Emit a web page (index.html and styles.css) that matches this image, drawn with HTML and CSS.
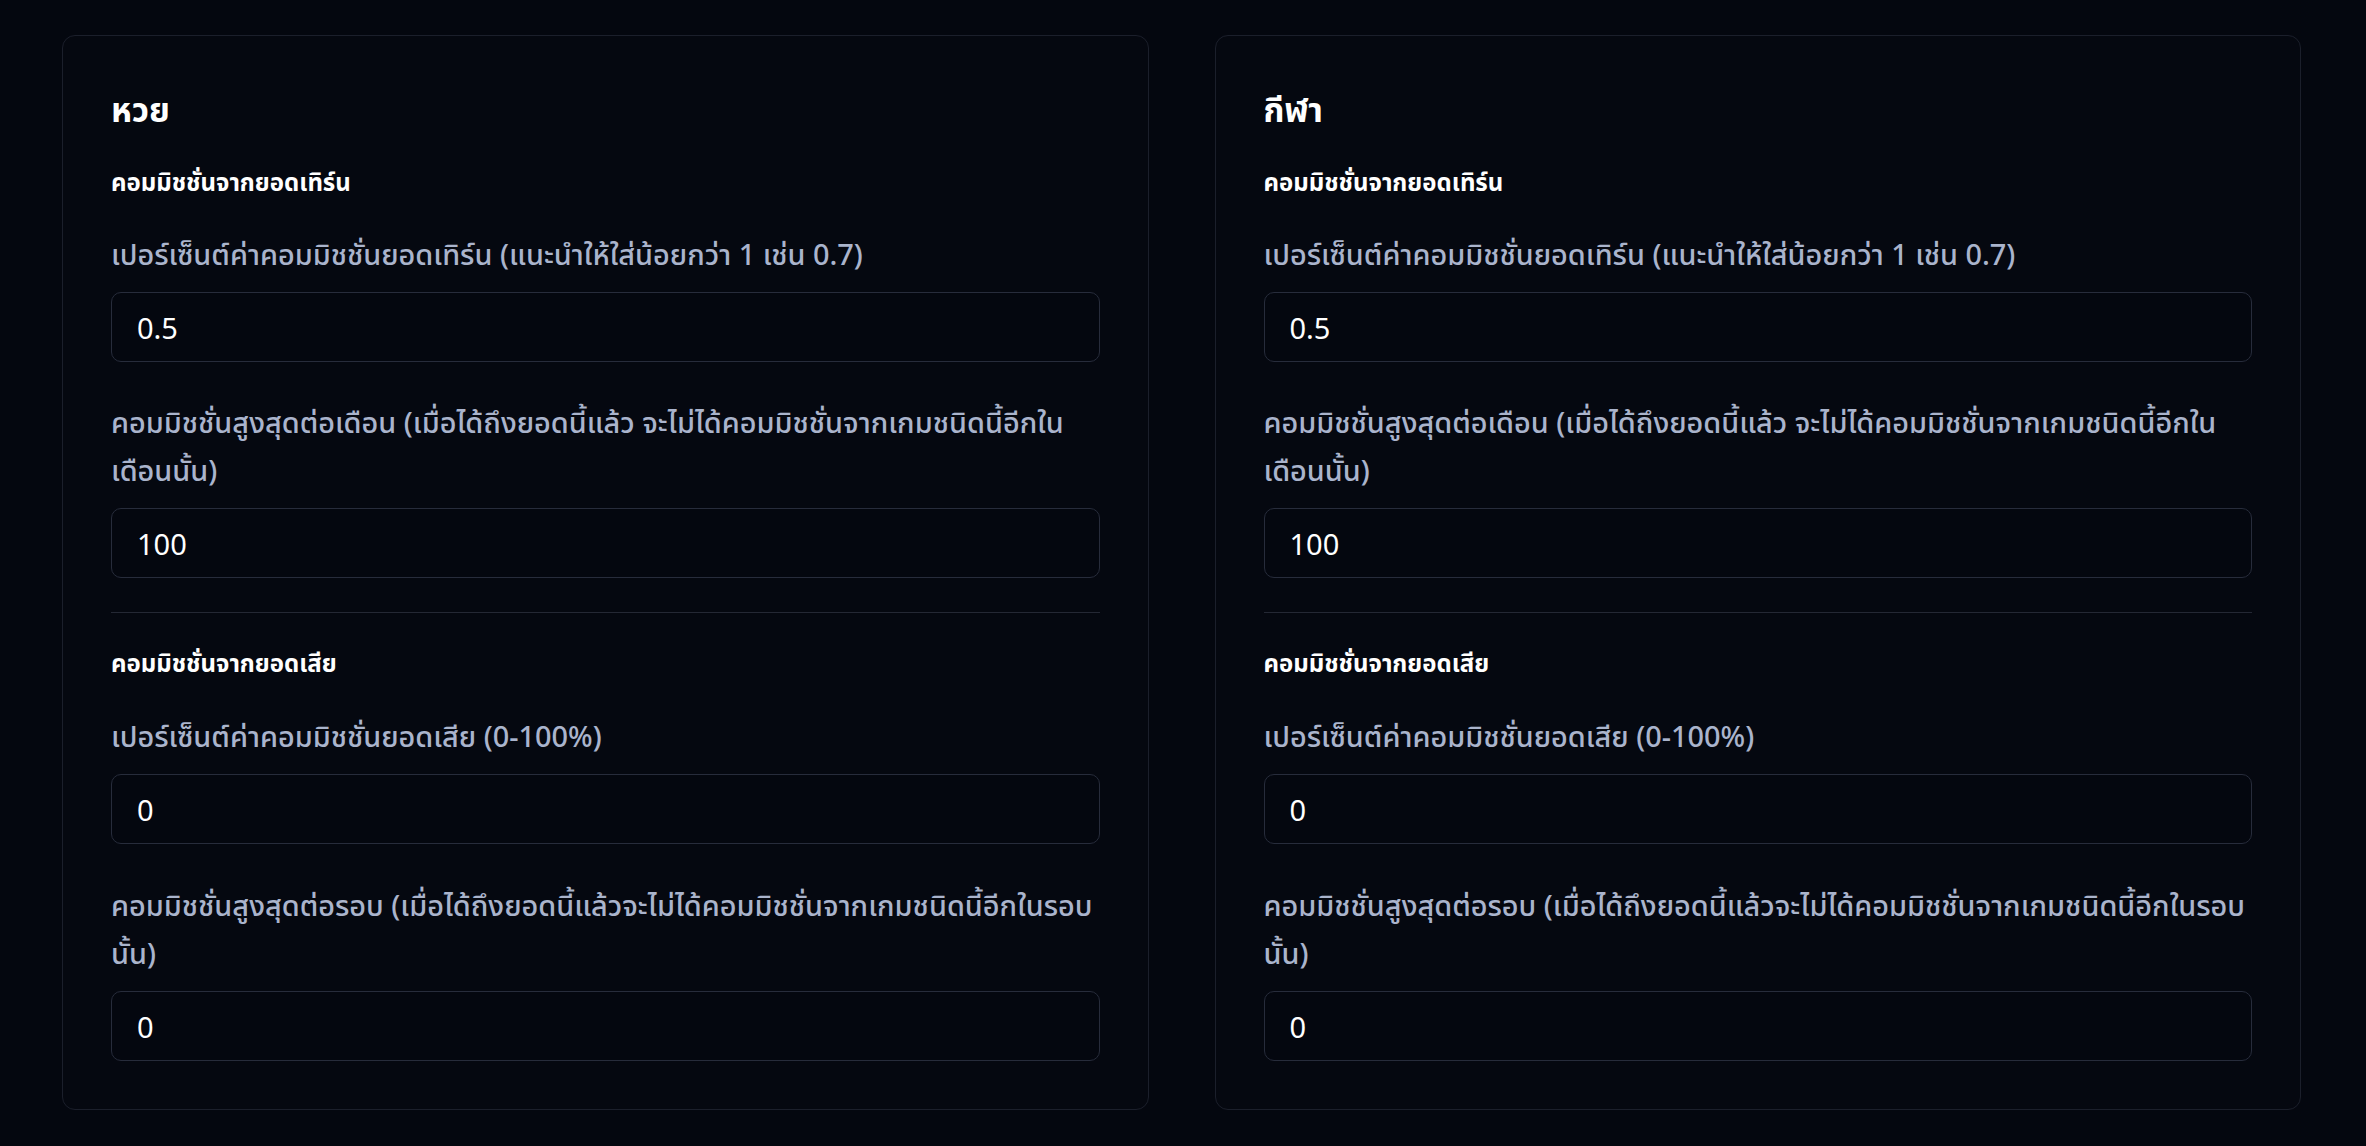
FILE: index.html
```html
<!DOCTYPE html>
<html lang="th">
<head>
<meta charset="utf-8">
<title>Commission settings</title>
<link rel="stylesheet" href="styles.css">
</head>
<body>
<main class="page">
  <section class="card">
    <h2 class="card-title">หวย</h2>
    <h3 class="section-title">คอมมิชชั่นจากยอดเทิร์น</h3>
    <div class="field">
      <label class="field-label">เปอร์เซ็นต์ค่าคอมมิชชั่นยอดเทิร์น (แนะนำให้ใส่น้อยกว่า 1 เช่น 0.7)</label>
      <input class="field-input" type="text" value="0.5">
    </div>
    <div class="field">
      <label class="field-label">คอมมิชชั่นสูงสุดต่อเดือน (เมื่อได้ถึงยอดนี้แล้ว จะไม่ได้คอมมิชชั่นจากเกมชนิดนี้อีกใน<wbr>เดือนนั้น)</label>
      <input class="field-input" type="text" value="100">
    </div>
    <hr class="divider">
    <h3 class="section-title">คอมมิชชั่นจากยอดเสีย</h3>
    <div class="field">
      <label class="field-label">เปอร์เซ็นต์ค่าคอมมิชชั่นยอดเสีย (0-100%)</label>
      <input class="field-input" type="text" value="0">
    </div>
    <div class="field">
      <label class="field-label">คอมมิชชั่นสูงสุดต่อรอบ (เมื่อได้ถึงยอดนี้แล้วจะไม่ได้คอมมิชชั่นจากเกมชนิดนี้อีกในรอบ<wbr>นั้น)</label>
      <input class="field-input" type="text" value="0">
    </div>
  </section>
  <section class="card">
    <h2 class="card-title">กีฬา</h2>
    <h3 class="section-title">คอมมิชชั่นจากยอดเทิร์น</h3>
    <div class="field">
      <label class="field-label">เปอร์เซ็นต์ค่าคอมมิชชั่นยอดเทิร์น (แนะนำให้ใส่น้อยกว่า 1 เช่น 0.7)</label>
      <input class="field-input" type="text" value="0.5">
    </div>
    <div class="field">
      <label class="field-label">คอมมิชชั่นสูงสุดต่อเดือน (เมื่อได้ถึงยอดนี้แล้ว จะไม่ได้คอมมิชชั่นจากเกมชนิดนี้อีกใน<wbr>เดือนนั้น)</label>
      <input class="field-input" type="text" value="100">
    </div>
    <hr class="divider">
    <h3 class="section-title">คอมมิชชั่นจากยอดเสีย</h3>
    <div class="field">
      <label class="field-label">เปอร์เซ็นต์ค่าคอมมิชชั่นยอดเสีย (0-100%)</label>
      <input class="field-input" type="text" value="0">
    </div>
    <div class="field">
      <label class="field-label">คอมมิชชั่นสูงสุดต่อรอบ (เมื่อได้ถึงยอดนี้แล้วจะไม่ได้คอมมิชชั่นจากเกมชนิดนี้อีกในรอบ<wbr>นั้น)</label>
      <input class="field-input" type="text" value="0">
    </div>
  </section>
</main>
</body>
</html>
```

FILE: styles.css
```css
* { box-sizing: border-box; }
html, body {
  margin: 0;
  padding: 0;
  background: #04070f;
}
body {
  font-family: "Noto Sans", "Noto Sans Thai", sans-serif;
  color: #ffffff;
  min-height: 1146px;
}
.page {
  display: grid;
  grid-template-columns: 1fr 1fr;
  gap: 66px;
  padding: 35px 65px 35px 62px;
  align-items: start;
}
.card {
  background: #050810;
  border: 1px solid #1b1f2b;
  border-radius: 13px;
  padding: 48px;
  display: flex;
  flex-direction: column;
}
.card-title {
  margin: 0;
  font-size: 33.5px;
  font-weight: 700;
  line-height: 50px;
  color: #ffffff;
}
.section-title {
  margin: 32px 0 0;
  font-size: 24px;
  font-weight: 700;
  line-height: 32px;
  color: #ffffff;
}
.field {
  display: flex;
  flex-direction: column;
  margin-top: 32px;
}
.field + .field { margin-top: 36px; }
.divider + .section-title + .field { margin-top: 33px; }
.divider + .section-title + .field + .field { margin-top: 37px; }
.field-label {
  font-size: 28.9px;
  font-weight: 500;
  line-height: 48px;
  color: #aab4cc;
  margin-bottom: 14px;
}
.field-input {
  height: 70px;
  width: 100%;
  background: #04070f;
  border: 1.5px solid #272c3b;
  border-radius: 10px;
  padding: 0 25px;
  font-family: "Noto Sans", "Noto Sans Thai", sans-serif;
  font-size: 29px;
  color: #ffffff;
  outline: none;
}
.divider {
  border: 0;
  border-top: 1.5px solid #242834;
  margin: 34px 0 0;
  height: 0;
}
.divider + .section-title { margin-top: 34px; }
```
